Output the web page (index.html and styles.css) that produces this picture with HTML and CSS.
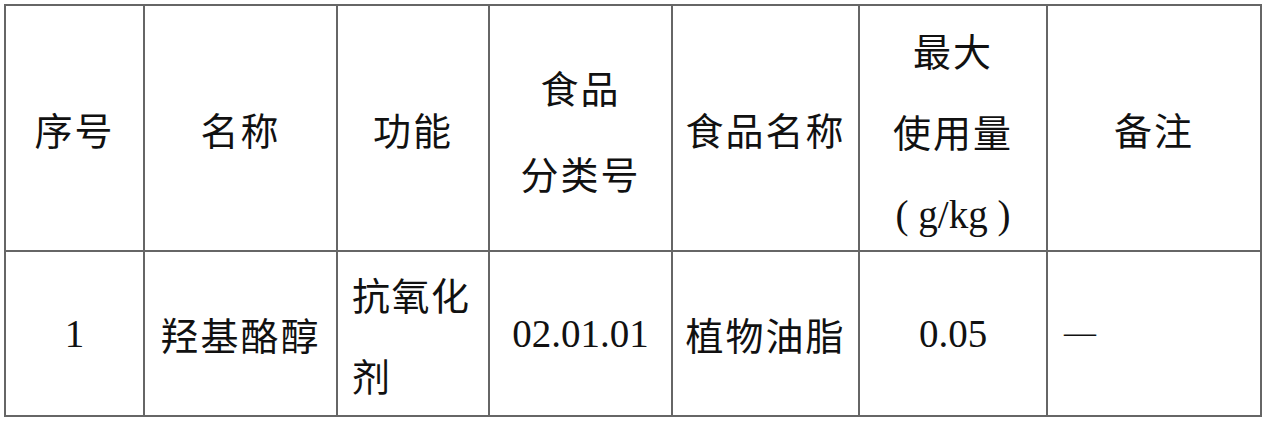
FILE: index.html
```html
<!DOCTYPE html>
<html lang="zh-CN">
<head>
<meta charset="utf-8">
<title>羟基酪醇</title>
<link rel="stylesheet" href="styles.css">
</head>
<body>
<div class="table">
  <div class="cell"><div class="in">序号</div></div>
  <div class="cell"><div class="in">名称</div></div>
  <div class="cell"><div class="in">功能</div></div>
  <div class="cell two"><div class="in">食品<br>分类号</div></div>
  <div class="cell"><div class="in">食品名称</div></div>
  <div class="cell three"><div class="in">最大<br>使用量<br><span class="num">( g/kg )</span></div></div>
  <div class="cell"><div class="in">备注</div></div>

  <div class="cell num"><div class="in">1</div></div>
  <div class="cell"><div class="in">羟基酪醇</div></div>
  <div class="cell left wrap"><div class="in">抗氧化剂</div></div>
  <div class="cell num"><div class="in">02.01.01</div></div>
  <div class="cell"><div class="in">植物油脂</div></div>
  <div class="cell num"><div class="in">0.05</div></div>
  <div class="cell left dashcell"><div class="in"><span class="dash">—</span></div></div>
</div>
</body>
</html>
```

FILE: styles.css
```css
html, body {
  margin: 0;
  padding: 0;
  background: #ffffff;
}

body {
  padding: 4px 0 0 4px;
  font-family: "Liberation Serif", "Noto Sans CJK SC", serif;
  color: #111111;
}

.table {
  display: grid;
  grid-template-columns: 137px 191px 150px 181px 185px 186px 212px;
  grid-template-rows: 244px 163px;
  gap: 2px;
  padding: 2px;
  width: max-content;
  background: #666666;
}

.cell {
  background: #ffffff;
  display: flex;
  align-items: center;
  justify-content: center;
  text-align: center;
  font-size: 38px;
  line-height: 81px;
  letter-spacing: 2px;
  font-family: "Noto Sans CJK SC", "Liberation Serif", sans-serif;
  font-weight: 400;
  overflow: hidden;
}

.in {
  flex: 1 1 auto;
  min-width: 0;
}

.num {
  font-family: "Liberation Serif", "Noto Sans CJK SC", serif;
  font-size: 39px;
  letter-spacing: 0;
}

.cell.two {
  line-height: 86px;
  padding-top: 4px;
}

.cell.three {
  padding-top: 8px;
}

.cell.three .num {
  white-space: pre;
}

.cell.left {
  justify-content: flex-start;
  text-align: left;
  padding-left: 14px;
  padding-right: 12px;
}

.cell.wrap {
  letter-spacing: 1.5px;
}

.cell.dashcell {
  padding-bottom: 9px;
}

.dash {
  font-family: "Liberation Serif", serif;
  font-size: 32px;
  letter-spacing: 0;
  padding-left: 2px;
}
```
